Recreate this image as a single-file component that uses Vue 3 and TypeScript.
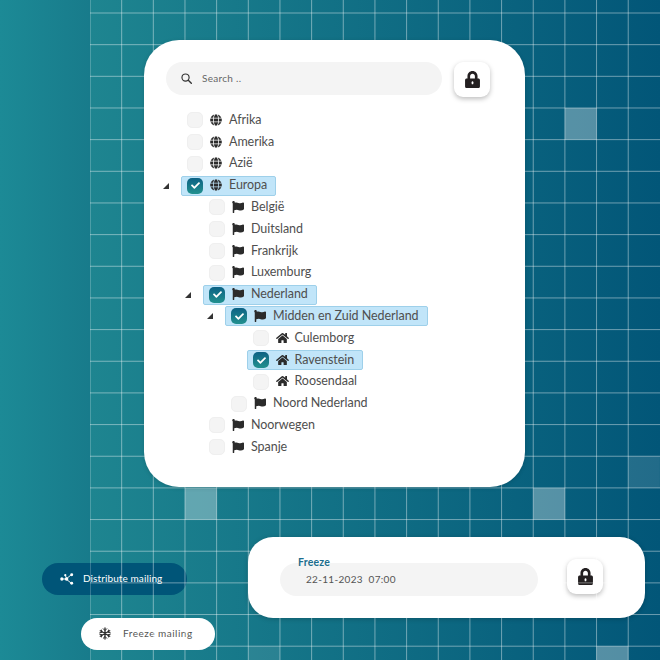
<script setup lang="ts">
type Kind = 'globe' | 'flag' | 'home'
interface Node { label: string; level: number; kind: Kind; checked?: boolean; open?: boolean }

const nodes: Node[] = [
  { label: 'Afrika', level: 0, kind: 'globe' },
  { label: 'Amerika', level: 0, kind: 'globe' },
  { label: 'Azië', level: 0, kind: 'globe' },
  { label: 'Europa', level: 0, kind: 'globe', checked: true, open: true },
  { label: 'België', level: 1, kind: 'flag' },
  { label: 'Duitsland', level: 1, kind: 'flag' },
  { label: 'Frankrijk', level: 1, kind: 'flag' },
  { label: 'Luxemburg', level: 1, kind: 'flag' },
  { label: 'Nederland', level: 1, kind: 'flag', checked: true, open: true },
  { label: 'Midden en Zuid Nederland', level: 2, kind: 'flag', checked: true, open: true },
  { label: 'Culemborg', level: 3, kind: 'home' },
  { label: 'Ravenstein', level: 3, kind: 'home', checked: true },
  { label: 'Roosendaal', level: 3, kind: 'home' },
  { label: 'Noord Nederland', level: 2, kind: 'flag' },
  { label: 'Noorwegen', level: 1, kind: 'flag' },
  { label: 'Spanje', level: 1, kind: 'flag' },
]

const icons: Record<Kind, { box: string; d: string }> = {
  globe: {
    box: '0 0 496 512',
    d: 'M336.5 160C322 70.7 287.8 8 248 8s-74 62.7-88.5 152h177zM152 256c0 22.2 1.2 43.5 3.3 64h185.3c2.1-20.5 3.3-41.8 3.3-64s-1.2-43.5-3.3-64H155.3c-2.1 20.5-3.3 41.8-3.3 64zm324.7-96c-28.6-67.9-86.5-120.4-158-141.6 24.4 33.8 41.2 84.7 50 141.6h108zM177.2 18.4C105.8 39.6 47.8 92.1 19.3 160h108c8.7-56.9 25.5-107.8 49.9-141.6zM487.4 192H372.7c2.1 21 3.3 42.5 3.3 64s-1.2 43-3.3 64h114.6c5.5-20.5 8.6-41.8 8.6-64s-3.1-43.5-8.5-64zM120 256c0-21.5 1.2-43 3.3-64H8.6C3.2 212.5 0 233.8 0 256s3.2 43.5 8.6 64h114.6c-2-21-3.2-42.5-3.2-64zm39.5 96c14.5 89.3 48.7 152 88.5 152s74-62.7 88.5-152h-177zm159.3 141.6c71.4-21.2 129.4-73.7 158-141.6h-108c-8.8 56.9-25.6 107.8-50 141.6zM19.3 352c28.6 67.9 86.5 120.4 158 141.6-24.4-33.8-41.2-84.7-50-141.6h-108z',
  },
  flag: {
    box: '0 0 512 512',
    d: 'M349.565 98.783C295.978 98.783 251.721 64 184.348 64c-24.955 0-47.309 4.384-68.045 12.013a55.947 55.947 0 0 0 3.586-23.562C118.117 24.015 94.806 1.206 66.338.048 34.345-1.254 8 24.296 8 56c0 19.026 9.497 35.825 24 45.945V488c0 13.255 10.745 24 24 24h16c13.255 0 24-10.745 24-24v-94.4c28.311-12.064 63.582-22.122 114.435-22.122 53.588 0 97.844 34.783 165.217 34.783 48.169 0 86.667-16.294 122.505-40.858C506.84 359.452 512 349.571 512 339.045v-243.1c0-23.393-24.269-38.87-45.485-29.016-34.338 15.948-76.454 31.854-116.95 31.854z',
  },
  home: {
    box: '0 0 576 512',
    d: 'M280.37 148.26L96 300.11V464a16 16 0 0 0 16 16l112.06-.29a16 16 0 0 0 15.92-16V368a16 16 0 0 1 16-16h64a16 16 0 0 1 16 16v95.64a16 16 0 0 0 16 16.05L464 480a16 16 0 0 0 16-16V300L295.67 148.26a12.19 12.19 0 0 0-15.3 0zM571.6 251.47L488 182.56V44.05a12 12 0 0 0-12-12h-56a12 12 0 0 0-12 12v72.61L318.47 43a48 48 0 0 0-61 0L4.34 251.47a12 12 0 0 0-1.6 16.9l25.5 31A12 12 0 0 0 45.15 301l235.22-193.74a12.19 12.19 0 0 1 15.3 0L530.9 301a12 12 0 0 0 16.9-1.6l25.5-31a12 12 0 0 0-1.7-16.93z',
  },
}

const checkPath =
  'M173.898 439.404l-166.4-166.4c-9.997-9.997-9.997-26.206 0-36.204l36.203-36.204c9.997-9.998 26.207-9.998 36.204 0L192 312.69 432.095 72.596c9.997-9.997 26.207-9.997 36.204 0l36.203 36.204c9.997 9.997 9.997 26.206 0 36.204l-294.4 294.401c-9.998 9.997-26.207 9.997-36.204-.001z'
const lockPath =
  'M400 224h-24v-72C376 68.2 307.8 0 224 0S72 68.2 72 152v72H48c-26.5 0-48 21.5-48 48v192c0 26.5 21.5 48 48 48h352c26.5 0 48-21.5 48-48V272c0-26.5-21.5-48-48-48zm-104 0H152v-72c0-39.7 32.3-72 72-72s72 32.3 72 72v72z'

const step = 31.66
const vLines = Array.from({ length: 18 }, (_, i) => 90 + i * step)
const hLines = Array.from({ length: 21 }, (_, i) => 13 + i * step)
const cells = [
  { col: 15, row: 3, o: 0.32 },
  { col: 14, row: 15, o: 0.32 },
  { col: 3, row: 15, o: 0.32 },
  { col: 17, row: 14, o: 0.13 },
  { col: 5, row: 20, o: 0.09 },
  { col: 16, row: 20, o: 0.32 },
]
</script>

<template>
  <div class="page">
    <svg class="backdrop" width="570" height="660" viewBox="90 0 570 660" aria-hidden="true">
      <rect
        v-for="c in cells"
        :key="`${c.col}-${c.row}`"
        :x="90 + c.col * step"
        :y="13 + c.row * step"
        :width="step"
        :height="step"
        fill="#fff"
        :fill-opacity="c.o"
      />
      <line v-for="x in vLines" :key="x" :x1="x" :x2="x" y1="0" y2="660" stroke="#fff" stroke-opacity="0.42" />
      <line v-for="y in hLines" :key="y" x1="90" x2="660" :y1="y" :y2="y" stroke="#fff" stroke-opacity="0.42" />
    </svg>

    <section class="card">
      <div class="toolbar">
        <div class="search">
          <svg class="search-icon" viewBox="0 0 16 16" width="11" height="11">
            <circle cx="6.6" cy="6.6" r="5.2" fill="none" stroke="#333" stroke-width="1.7" />
            <line x1="10.6" y1="10.6" x2="15" y2="15" stroke="#333" stroke-width="2" stroke-linecap="round" />
          </svg>
          <span class="placeholder">Search ..</span>
        </div>
        <button class="lock-btn" type="button">
          <svg viewBox="0 0 448 512" width="15" height="17">
            <path :d="lockPath" fill="#231f20" />
            <rect x="198" y="310" width="52" height="90" rx="26" fill="#fff" />
          </svg>
        </button>
      </div>

      <ul class="tree">
        <li v-for="n in nodes" :key="n.label" class="row" :class="`level-${n.level}`">
          <span class="toggle"><i v-if="n.open" class="arrow"></i></span>
          <span class="node" :class="{ selected: n.checked }">
            <span class="box" :class="{ on: n.checked }">
              <svg v-if="n.checked" viewBox="0 0 512 512" width="9" height="9">
                <path :d="checkPath" fill="#fff" />
              </svg>
            </span>
            <svg class="node-icon" :class="n.kind" :viewBox="icons[n.kind].box" :width="n.kind === 'home' ? 13 : 12" height="12">
              <path :d="icons[n.kind].d" fill="#2b2b2b" />
            </svg>
            <span class="label" :class="n.kind">{{ n.label }}</span>
          </span>
        </li>
      </ul>
    </section>

    <div class="bottom">
      <div class="actions">
        <button class="pill dark" type="button">
          <svg viewBox="0 0 16 14" width="14" height="12">
            <g fill="none" stroke="#fff" stroke-width="1.1">
              <line x1="2" y1="7" x2="7" y2="7" />
              <line x1="7" y1="7" x2="13" y2="2" />
              <line x1="7" y1="7" x2="13" y2="12" />
              <line x1="6" y1="3" x2="8" y2="7" />
            </g>
            <g fill="#fff">
              <circle cx="2" cy="7" r="1.9" />
              <circle cx="7.5" cy="7" r="2.1" />
              <circle cx="13.5" cy="2" r="1.7" />
              <circle cx="13.5" cy="12" r="1.7" />
              <circle cx="6" cy="2.6" r="1.3" />
            </g>
          </svg>
          <span>Distribute mailing</span>
        </button>
        <button class="pill light" type="button">
          <svg viewBox="0 0 24 24" width="12" height="13">
            <g fill="none" stroke="#2b2b2b" stroke-width="2.6" stroke-linecap="round">
              <path d="M12 1v22M2.5 6.5l19 11M21.5 6.5l-19 11" />
              <path d="M8.5 2.5L12 6l3.5-3.5M8.5 21.5L12 18l3.5 3.5" stroke-width="2" />
              <path d="M1.5 10.5L6 9.5 5 5M22.5 13.5L18 14.5l1 4.5M22.5 10.5L18 9.5 19 5M1.500 13.5L6 14.5 5 19" stroke-width="2" />
            </g>
          </svg>
          <span>Freeze mailing</span>
        </button>
      </div>

      <section class="freeze-card">
        <div class="freeze-input">
          <label class="freeze-label">Freeze</label>
          <span class="freeze-value">22-11-2023&nbsp; 07:00</span>
        </div>
        <button class="lock-btn raised" type="button">
          <svg viewBox="0 0 448 512" width="15" height="17">
            <path :d="lockPath" fill="#231f20" />
            <rect x="198" y="310" width="52" height="90" rx="26" fill="#fff" />
          </svg>
        </button>
      </section>
    </div>
  </div>
</template>

<style>
html,
body {
  margin: 0;
  padding: 0;
}
</style>

<style scoped>
.page {
  position: relative;
  width: 660px;
  height: 660px;
  overflow: hidden;
  box-sizing: border-box;
  padding-top: 40px;
  font-family: "Lato", "Noto Sans", sans-serif;
  color: #555;
  background:
    linear-gradient(90deg, #1e8590 0, #025678 100%) 90px 0 / 570px 100% no-repeat,
    linear-gradient(90deg, #1c8a96 0, #187b8b 90px) 0 0 / 90px 100% no-repeat;
}
.backdrop {
  position: absolute;
  left: 90px;
  top: 0;
}
.card {
  position: relative;
  width: 381px;
  height: 447px;
  margin-left: 144px;
  box-sizing: border-box;
  padding-top: 21.5px;
  background: #fff;
  border-radius: 35px;
  box-shadow: 0 1px 4px rgba(0, 0, 0, 0.15);
}
.toolbar {
  display: flex;
  align-items: flex-start;
  gap: 12px;
  padding-left: 22px;
}
.search {
  display: flex;
  align-items: center;
  width: 276px;
  height: 33px;
  margin-top: 0.5px;
  box-sizing: border-box;
  padding-left: 15px;
  border-radius: 17px;
  background: #f4f4f4;
}
.search-icon {
  margin-right: 10px;
}
.placeholder {
  font-size: 10px;
  letter-spacing: 0.3px;
  line-height: 12px;
  margin-top: -2px;
  color: #666;
}
.lock-btn {
  display: flex;
  flex: none;
  align-items: center;
  justify-content: center;
  width: 36px;
  height: 35.5px;
  padding: 0;
  border: 0;
  border-radius: 9px;
  background: #fff;
  box-shadow: 0 2px 5px rgba(0, 0, 0, 0.26);
}
.lock-btn.raised {
  margin-top: -2.6px;
}
.tree {
  list-style: none;
  margin: 12.4px 0 0;
  padding: 0 0 0 15px;
}
.row {
  display: flex;
  align-items: center;
  height: 21.81px;
}
.level-1 { padding-left: 22px; }
.level-2 { padding-left: 44px; }
.level-3 { padding-left: 66px; }
.toggle {
  display: flex;
  flex: none;
  align-items: center;
  width: 22px;
  height: 100%;
  padding-left: 4px;
  box-sizing: border-box;
}
.arrow {
  width: 0;
  height: 0;
  border-left: 6px solid transparent;
  border-bottom: 6px solid #333;
}
.node {
  display: flex;
  align-items: center;
  height: 20px;
  box-sizing: border-box;
  padding: 0 8px 0 5px;
  border: 1px solid transparent;
  border-radius: 2px;
}
.node.selected {
  background: #c1e5f9;
  border-color: #9ed0ea;
}
.box {
  display: flex;
  flex: none;
  align-items: center;
  justify-content: center;
  width: 16px;
  height: 16px;
  box-sizing: border-box;
  border-radius: 5px;
  background: #f4f4f4;
  border: 1px solid #efefef;
}
.box.on {
  background: linear-gradient(180deg, #0c6184 0%, #22918f 100%);
  border: 0;
}
.node-icon {
  flex: none;
  margin-left: 7px;
  margin-top: -1px;
}
.label {
  margin-left: 7px;
  margin-top: -1px;
  font-size: 12.5px;
  letter-spacing: -0.05px;
  line-height: 18px;
  white-space: nowrap;
  color: #4f4f4f;
}
.label.home {
  margin-left: 5.5px;
}
.bottom {
  display: flex;
  align-items: flex-start;
}
.actions {
  width: 248px;
  flex: none;
}
.pill {
  display: flex;
  align-items: center;
  height: 32px;
  box-sizing: border-box;
  border: 0;
  border-radius: 17px;
  font-family: inherit;
  font-size: 10px;
  white-space: nowrap;
}
.pill span {
  margin-top: -1px;
}
.pill.dark {
  width: 145px;
  margin: 75.7px 0 0 42px;
  padding-left: 18px;
  gap: 9px;
  letter-spacing: 0.1px;
  background: #005578;
  color: #fff;
}
.pill.light {
  width: 134px;
  margin: 23.3px 0 0 81px;
  padding-left: 18px;
  gap: 12px;
  letter-spacing: 0.5px;
  background: #fff;
  color: #555;
}
.freeze-card {
  display: flex;
  flex: none;
  align-items: center;
  gap: 29px;
  width: 397px;
  height: 81px;
  margin-top: 50.3px;
  box-sizing: border-box;
  padding-left: 32px;
  border-radius: 25px;
  background: #fff;
  box-shadow: 0 1px 5px rgba(0, 0, 0, 0.2);
}
.freeze-input {
  position: relative;
  display: flex;
  align-items: center;
  width: 258px;
  height: 33px;
  margin-top: 2.6px;
  box-sizing: border-box;
  padding-left: 26px;
  border-radius: 17px;
  background: #f4f4f4;
}
.freeze-label {
  position: absolute;
  left: 18px;
  top: -7px;
  font-size: 10.5px;
  font-weight: 700;
  letter-spacing: 0.2px;
  line-height: 12px;
  color: #1c6e8e;
}
.freeze-value {
  font-size: 10px;
  letter-spacing: 0.3px;
  color: #555;
}
</style>
